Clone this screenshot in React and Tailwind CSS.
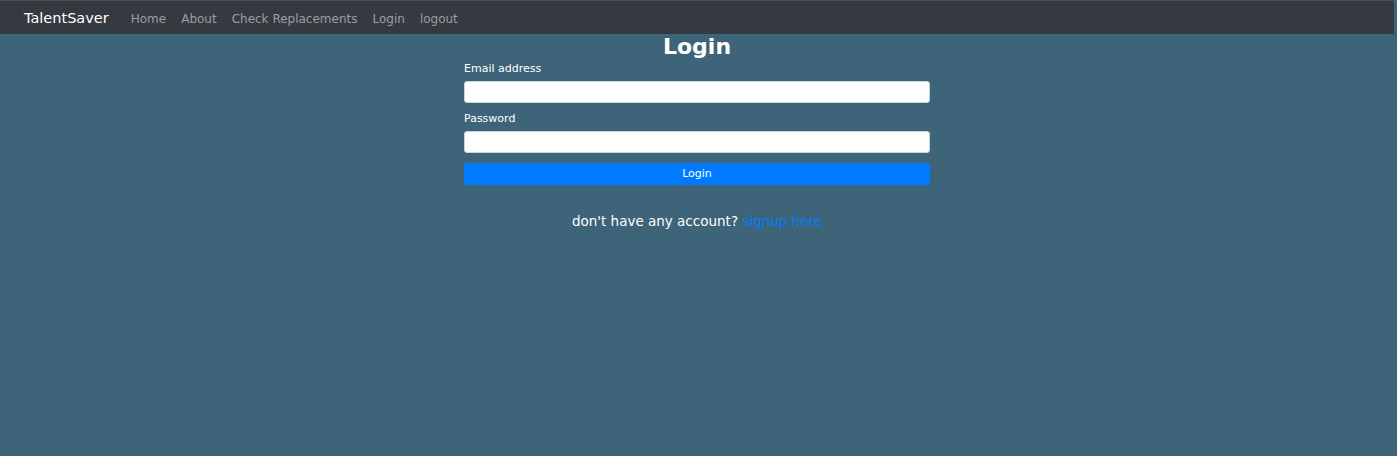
import React from 'react';

const App = () => {
  return (
    <div className="min-h-[456px] bg-[#3d6478] font-['DejaVu_Sans','Open_Sans',sans-serif] pr-[3px]">
      {/* Navbar */}
      <nav className="h-[34px] bg-[#343a40] border-t border-[#4a4f55] flex items-center pt-[3px] px-[24px]">
        <span className="text-white text-[14.5px] mr-[22px]">TalentSaver</span>
        <div className="flex items-center gap-[15px] text-[12px] text-[#9a9ea3]">
          <a>Home</a>
          <a>About</a>
          <a>Check Replacements</a>
          <a>Login</a>
          <a>logout</a>
        </div>
      </nav>

      {/* Login form */}
      <div className="w-[466px] mx-auto">
        <h1 className="text-white text-center text-[22px] font-bold leading-[24px] mt-[1px]">Login</h1>
        <div className="mt-[3px]">
          <label className="block text-white text-[11px] leading-[14px] mb-[5px]">Email address</label>
          <input type="email" className="block w-full h-[22px] bg-white rounded-[3px] border border-[#ced4da]" />
        </div>
        <div className="mt-[9px]">
          <label className="block text-white text-[11px] leading-[14px] mb-[5px]">Password</label>
          <input type="password" className="block w-full h-[22px] bg-white rounded-[3px] border border-[#ced4da]" />
        </div>
        <button className="mt-[10px] w-full h-[22px] bg-[#007bff] rounded-[3px] text-white text-[11px]">Login</button>
        <p className="text-center text-white text-[13.5px] leading-[18px] mt-[27px]">
          don't have any account? <a className="text-[#007bff]">signup here</a>
        </p>
      </div>
    </div>
  );
};

export default App;
